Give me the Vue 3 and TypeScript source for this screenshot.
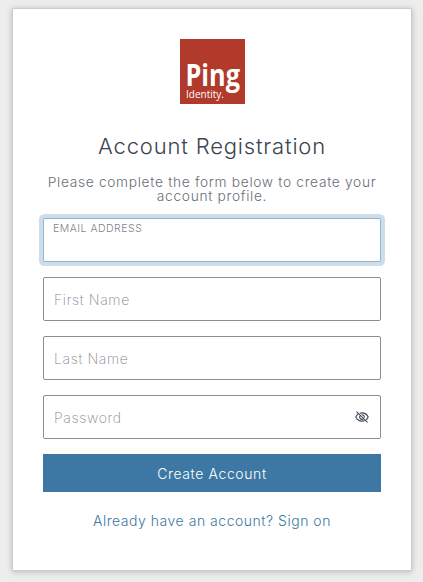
<script setup lang="ts">
import { reactive, ref } from 'vue'

type FieldKey = 'firstName' | 'lastName' | 'password'

interface Field {
  key: FieldKey
  label: string
}

const fields: Field[] = [
  { key: 'firstName', label: 'First Name' },
  { key: 'lastName', label: 'Last Name' },
  { key: 'password', label: 'Password' },
]

const email = ref('')
const form = reactive<Record<FieldKey, string>>({ firstName: '', lastName: '', password: '' })
const showPassword = ref(false)
</script>

<template>
  <main class="page">
    <section class="card">
      <svg class="logo" viewBox="0 0 65 65" role="img">
        <rect width="65" height="65" fill="#b13a2b" />
        <text class="logo-name" x="5.500" y="47" textLength="54.500" lengthAdjust="spacingAndGlyphs">Ping</text>
        <text class="logo-sub" x="6" y="58.500" textLength="38" lengthAdjust="spacingAndGlyphs">Identity.</text>
      </svg>
      <h1 class="title">Account Registration</h1>
      <p class="intro">Please complete the form below to create your<br />account profile.</p>
      <form class="form" @submit.prevent>
        <label class="field focused">
          <span class="floating">EMAIL ADDRESS</span>
          <input v-model="email" class="input" type="email" />
        </label>
        <div v-for="field in fields" :key="field.key" class="field">
          <input
            v-model="form[field.key]"
            class="input"
            :type="field.key === 'password' && !showPassword ? 'password' : 'text'"
            :placeholder="field.label"
          />
          <button v-if="field.key === 'password'" class="toggle" type="button" @click="showPassword = !showPassword">
            <svg viewBox="0 0 14 12" fill="none" stroke="#414954" stroke-width="1.1">
              <path d="M3.400 2.800C2.300 3.500 1.400 4.600.8 6c1.200 2.600 3.500 4.100 6.200 4.100 1 0 1.800-.2 2.600-.5M4.800 2.200C5.500 2 6.200 1.900 7 1.900c2.700 0 5 1.500 6.200 4.100-.5 1.200-1.200 2.100-2.100 2.800" />
              <path d="M4.800 4.900C4.200 6.700 5.400 8.400 7.100 8.400c.4 0 .8-.1 1.100-.3M6.600 3.700C8.300 3.500 9.600 4.900 9.300 6.600" />
              <path d="M1.500.6l11 10.800" />
            </svg>
          </button>
        </div>
        <button class="submit" type="submit">Create Account</button>
      </form>
      <a class="signon">Already have an account? Sign on</a>
    </section>
  </main>
</template>

<style>
body {
  background: #ededed;
}
</style>

<style scoped>
.page {
  box-sizing: border-box;
  height: 582px;
  padding: 8px 11px 11px 12px;
  background: #ededed;
  font-family: Inter, "Open Sans", sans-serif;
  font-weight: 300;
}
.card {
  box-sizing: border-box;
  display: flex;
  flex-direction: column;
  align-items: center;
  height: 563px;
  padding: 30px;
  border: 1px solid #cdcdcd;
  background: #fff;
  box-shadow: 0 1px 6px rgba(0, 0, 0, 0.22);
}
.logo {
  width: 65px;
  height: 65px;
  flex: none;
  overflow: visible;
}
.logo text {
  fill: #fff;
  font-family: "Open Sans", sans-serif;
}
.logo-name {
  font-size: 30.5px;
  font-weight: 700;
}
.logo-sub {
  font-size: 11.5px;
  font-weight: 400;
}
.title {
  margin: 28px 0 0;
  color: #3b4350;
  font-size: 22px;
  font-weight: 300;
  line-height: 28px;
  letter-spacing: 0.83px;
  white-space: nowrap;
}
.intro {
  margin: 15px 0 0;
  color: #686f77;
  font-size: 13.75px;
  line-height: 14px;
  letter-spacing: 0.68px;
  text-align: center;
  white-space: nowrap;
}
.form {
  display: flex;
  flex-direction: column;
  gap: 15px;
  width: 338px;
  margin-top: 15px;
}
.field {
  box-sizing: border-box;
  position: relative;
  display: flex;
  align-items: center;
  height: 44px;
  padding: 0 10px;
  border: 1px solid #8a8e96;
  border-radius: 2px;
  background: #fff;
}
.focused {
  flex-direction: column;
  align-items: flex-start;
  padding: 3px 9px 4px;
  border-color: #93b8d3;
  box-shadow: 0 0 0 4px #cddde9;
}
.floating {
  color: #7e838a;
  font-size: 10.5px;
  line-height: 13px;
  letter-spacing: 0.5px;
}
.input {
  flex: 1;
  width: 100%;
  min-width: 0;
  padding: 1px 0 0;
  border: 0;
  outline: 0;
  background: transparent;
  color: #3b4350;
  font: inherit;
  font-size: 14px;
  letter-spacing: 0.65px;
}
.input::placeholder {
  color: #83888f;
  font-weight: 200;
  opacity: 1;
}
.toggle {
  display: flex;
  width: 14px;
  height: 12px;
  margin-right: 1px;
  padding: 0;
  border: 0;
  background: none;
}
.toggle svg {
  width: 14px;
  height: 12px;
}
.submit {
  height: 38px;
  padding: 0;
  border: 0;
  background: #3d78a4;
  color: #fff;
  font: inherit;
  font-size: 14px;
  letter-spacing: 0.6px;
}
.signon {
  margin-top: 20px;
  color: #3d78a4;
  font-size: 14px;
  font-weight: 300;
  line-height: 18px;
  letter-spacing: 0.52px;
  white-space: nowrap;
}
</style>
